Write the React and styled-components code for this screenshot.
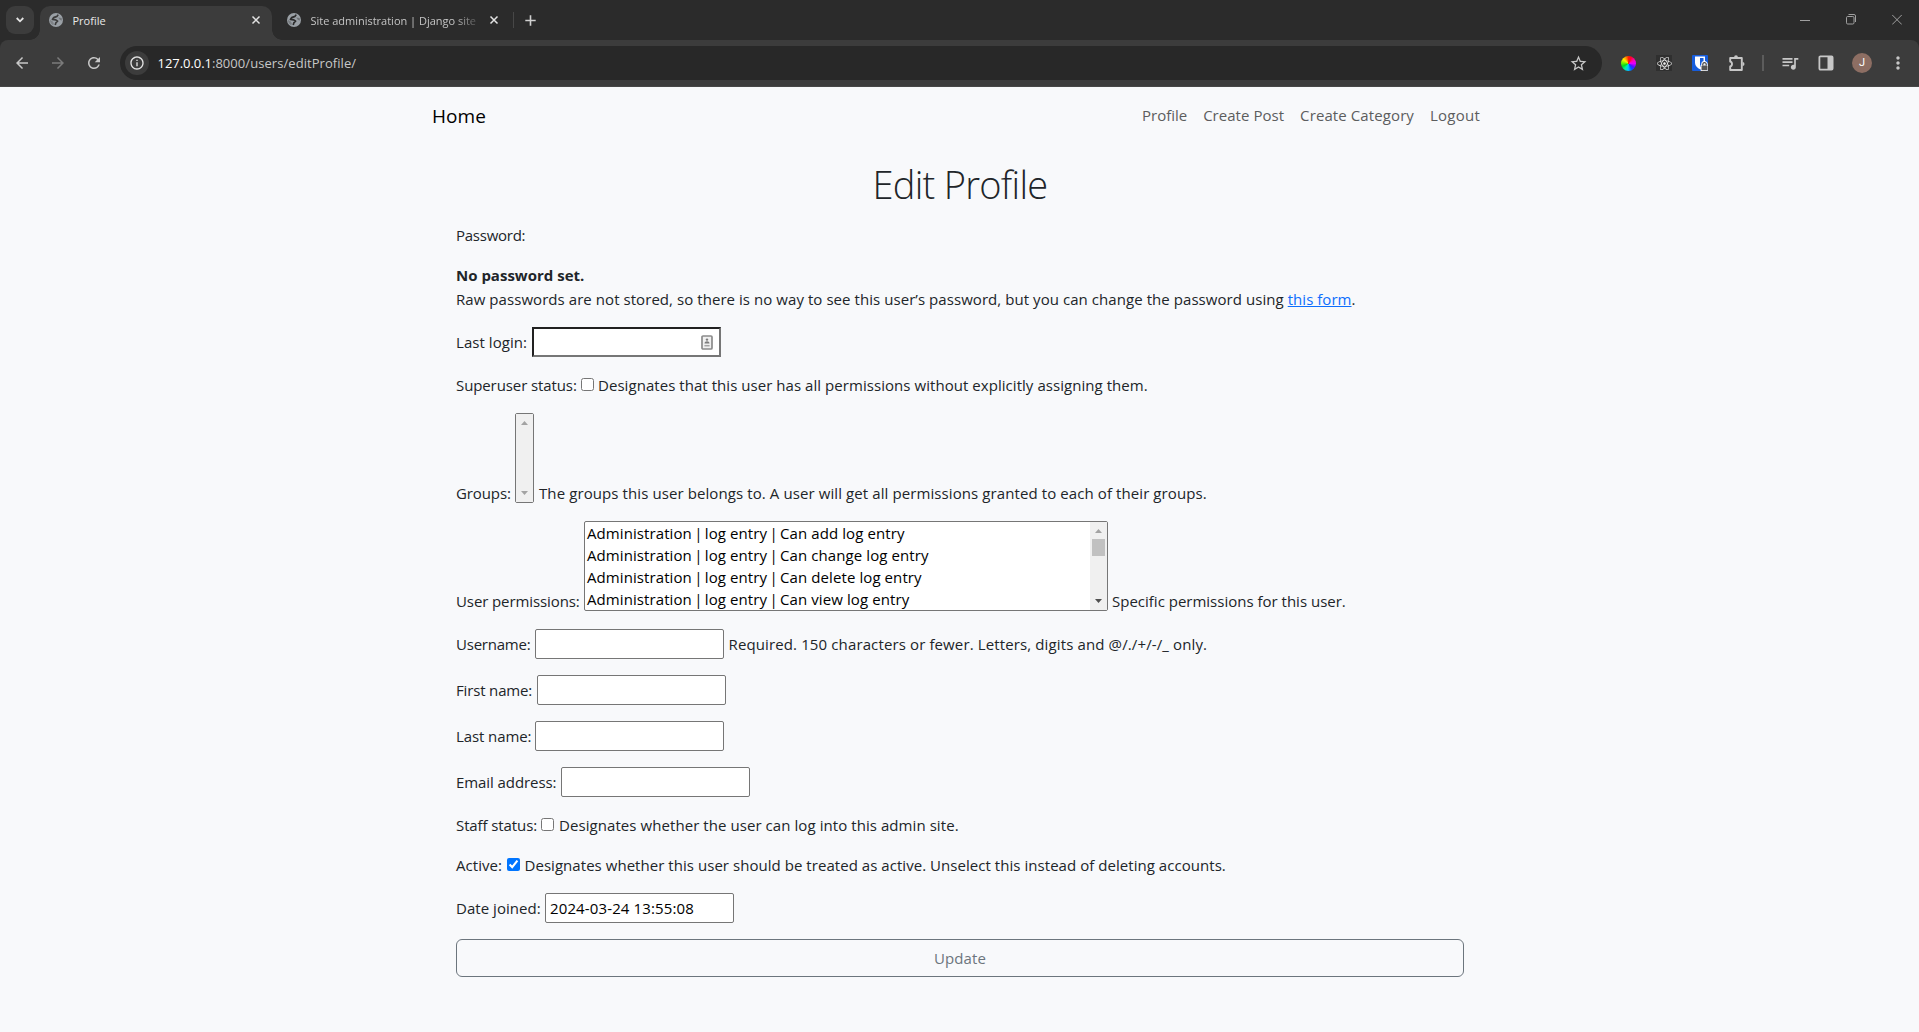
import React from "react";
import styled, { createGlobalStyle, css } from "styled-components";
import {
  MdArrowBack,
  MdArrowForward,
  MdRefresh,
  MdOutlineInfo,
  MdStarBorder,
  MdQueueMusic,
  MdMoreVert,
} from "react-icons/md";
import { FaReact } from "react-icons/fa";

const Global = createGlobalStyle`
  *, *::before, *::after { box-sizing: border-box; }
  body {
    margin: 0;
    background: #f8f9fb;
    color: #212529;
    font: 400 15px/24px "Open Sans", "Noto Sans", sans-serif;
    overflow: hidden;
  }
`;

/* ---------- browser chrome ---------- */

const Browser = styled.header`
  background: #2b2b2b;
  color: #e3e3e3;
`;

const TabStrip = styled.div`
  display: flex;
  align-items: flex-start;
  height: 40px;
  padding: 6px 6px 0;
`;

const TabSearch = styled.div`
  display: grid;
  place-items: center;
  width: 28px;
  height: 28px;
  margin-right: 6px;
  border-radius: 9px;
  background: #3c3c3c;
`;

const Tab = styled.div`
  position: relative;
  display: flex;
  align-items: center;
  width: ${(p) => (p.$active ? 232 : 241)}px;
  height: ${(p) => (p.$active ? 34 : 28)}px;
  padding: ${(p) => (p.$active ? "0 9px 6px" : "0 12px 0 15px")};
  color: ${(p) => (p.$active ? "#e8e8e8" : "#c4c4c4")};
  font-size: 11px;
  line-height: 16px;
  ${(p) =>
    p.$active &&
    css`
      background: #3c3c3c;
      border-radius: 10px 10px 0 0;
      &::before,
      &::after {
        content: "";
        position: absolute;
        bottom: 0;
        width: 10px;
        height: 10px;
      }
      &::before {
        left: -10px;
        background: radial-gradient(circle at 0 0, transparent 9.5px, #3c3c3c 10px);
      }
      &::after {
        right: -10px;
        background: radial-gradient(circle at 100% 0, transparent 9.5px, #3c3c3c 10px);
      }
    `}
`;

const TabTitle = styled.span`
  flex: 1;
  margin: 1px 8px 0 9.5px;
  overflow: hidden;
  white-space: nowrap;
  ${(p) =>
    p.$fade &&
    css`
      letter-spacing: -0.01px;
      mask-image: linear-gradient(to right, #000 calc(100% - 24px), rgba(0, 0, 0, 0.15));
    `}
`;

const TabDivider = styled.div`
  width: 1px;
  height: 16px;
  margin: 6px 9px 0 0;
  background: #474747;
`;

const NewTab = styled.div`
  display: grid;
  place-items: center;
  width: 15px;
  height: 28px;
`;

const WindowButtons = styled.div`
  display: flex;
  gap: 36px;
  margin: 8px 11px 0 auto;
`;

const Toolbar = styled.div`
  display: flex;
  align-items: center;
  height: 47px;
  padding: 0 3px 0 4px;
  background: #3c3c3c;
  border-bottom: 1px solid #474747;
  border-radius: 8px 8px 0 0;
`;

const ToolCell = styled.div`
  display: grid;
  place-items: center;
  flex: none;
  width: 36px;
  height: 34px;
  color: ${(p) => p.$color || "#c7c7c7"};
`;

const ToolDivider = styled.div`
  flex: none;
  width: 2px;
  height: 16px;
  margin: 0 8px;
  background: #5c5c5c;
`;

const Omnibox = styled.div`
  display: flex;
  align-items: center;
  flex: 1;
  height: 34px;
  margin: 0 8px;
  padding: 0 14.5px 0 5px;
  border-radius: 17px;
  background: #282828;
`;

const SiteInfo = styled.div`
  display: grid;
  place-items: center;
  width: 24px;
  height: 24px;
  border-radius: 50%;
  background: #3c3c3c;
  color: #e3e3e3;
`;

const Url = styled.span`
  flex: 1;
  margin-left: 8.5px;
  font-size: 13px;
  letter-spacing: 0.06px;
  color: #c7c7c7;
  b {
    font-weight: 400;
    letter-spacing: -0.05px;
    color: #fff;
  }
`;

const ColorWheel = styled.div`
  width: 15px;
  height: 15px;
  border-radius: 50%;
  background: conic-gradient(
    #ff2000, #ff0030 25deg, #ff00c0 60deg, #e000ff 90deg, #5010ff 125deg,
    #0050ff 150deg, #00c8ff 185deg, #00f0a0 215deg, #00d820 245deg,
    #70f000 275deg, #fff000 310deg, #ff9000 335deg, #ff2000
  );
`;

const ExtensionTile = styled.div`
  display: grid;
  place-items: center;
  width: 16px;
  height: 16px;
  background: #2f2f2f;
  color: #ececec;
`;

const Avatar = styled.div`
  display: grid;
  place-items: center;
  width: 20px;
  height: 20px;
  border-radius: 50%;
  background: #8d6e63;
  color: #fff;
  font: 400 11px/20px Roboto, sans-serif;
`;

/* ---------- page ---------- */

const Navbar = styled.nav`
  display: flex;
  align-items: center;
  justify-content: space-between;
  width: 1055px;
  height: 57px;
  margin: 0 auto;
  padding-right: 7px;
`;

const Brand = styled.a`
  font-size: 19px;
  line-height: 30px;
  letter-spacing: 0.05px;
  color: #000;
`;

const NavLinks = styled.div`
  display: flex;
  gap: 16px;
  padding-bottom: 2px;
  color: #5c5d5e;
`;

const NavItem = styled.a`
  letter-spacing: ${(p) => p.$track}px;
`;

const Main = styled.main`
  display: flex;
  flex-direction: column;
  width: 1009px;
  margin: 0 auto;
  padding-left: 1px;
`;

const Title = styled.h1`
  margin: 16px 0 15px;
  text-align: center;
  font-size: 38px;
  font-weight: 300;
  line-height: 48px;
  letter-spacing: -0.72px;
`;

const Row = styled.div`
  display: flex;
  align-items: ${(p) => (p.$tall ? "flex-end" : "center")};
  height: ${(p) => (p.$tall ? 92 : p.$field ? 30 : 24)}px;
  margin-bottom: ${(p) => (p.$tight ? 0 : 16)}px;
  white-space: pre;
`;

const Label = styled.label`
  flex: none;
  width: ${(p) => p.$width}px;
  letter-spacing: ${(p) => p.$track || 0}px;
`;

const Text = styled.span`
  margin-left: ${(p) => p.$gap || 0}px;
  letter-spacing: ${(p) => p.$track || 0}px;
`;

const Strong = styled.strong`
  font-weight: 700;
`;

const Link = styled.a`
  color: #0d6efd;
  text-decoration: underline;
  letter-spacing: 0.04px;
`;

const Field = styled.div`
  display: flex;
  align-items: center;
  width: 189px;
  height: 30px;
  padding: 0 4px;
  background: #fff;
  color: #000;
  letter-spacing: 0.13px;
  border: 1px solid #767676;
  border-radius: 2px;
  ${(p) =>
    p.$inset &&
    css`
      justify-content: flex-end;
      padding: 0 6px;
      border-width: 2px;
      border-color: #212121 #767676 #767676 #212121;
      border-radius: 0;
    `}
`;

const Checkbox = styled.input.attrs({ type: "checkbox", readOnly: true })`
  align-self: flex-start;
  width: 13px;
  height: 13px;
  margin: 5px 0 0;
`;

const ListBox = styled.div`
  display: flex;
  align-self: flex-start;
  height: 90px;
  width: ${(p) => p.$width}px;
  background: #fff;
  color: #000;
  border: 1px solid #767676;
  border-radius: 2px;
`;

const Options = styled.div`
  flex: 1;
  padding-left: 2px;
  overflow: hidden;
`;

const Option = styled.div`
  height: 22px;
  line-height: 22px;
  letter-spacing: 0.09px;
`;

const Bar = styled.span`
  margin: 0 -1.8px 0 -1.6px;
`;

const ScrollTrack = styled.div`
  display: flex;
  flex-direction: column;
  align-items: center;
  width: 17px;
  background: #f0f0f0;
`;

const Thumb = styled.div`
  width: 13px;
  height: 17px;
  background: #c1c1c1;
`;

const Arrow = styled.svg`
  display: block;
  width: 17px;
  height: 17px;
  fill: ${(p) => (p.$enabled ? "#505050" : "#a3a3a3")};
  margin-top: ${(p) => (p.$end ? "auto" : 0)};
`;

const UpdateButton = styled.button`
  height: 38px;
  padding: 0;
  border: 1px solid #6c757d;
  border-radius: 6px;
  background: transparent;
  color: #6c757d;
  font: inherit;
  letter-spacing: 0.1px;
`;

/* ---------- drawings ---------- */

const Globe = ({ bg }) => (
  <svg width="14" height="14" viewBox="0 0 14 14">
    <circle cx="7" cy="7" r="7" fill="#9aa0a6" />
    <path
      d="M9.2 1.6L8 3.4 4.6 4.6 3.4 6.4 6.8 6.9 8.6 8.2 7 9.6 6.2 12"
      fill="none"
      stroke={bg}
      strokeWidth="1.7"
      strokeLinejoin="round"
    />
    <path d="M.9 6.8l2.6 1.4 1.4 2-.6 2A6 6 0 0 1 .9 6.8z" fill={bg} opacity=".3" />
    <path d="M9.2 4.4l3.4.6.4 2.4-2-.4z" fill={bg} opacity=".4" />
  </svg>
);

const CloseTab = () => (
  <svg width="14" height="14" viewBox="-3 -3 14 14" stroke="#e3e3e3" strokeWidth="1.5">
    <path d="M.5.5l7 7M7.5.5l-7 7" />
  </svg>
);

const Puzzle = () => (
  <svg width="18" height="18" viewBox="-1 0 18 18" fill="none" stroke="#c7c7c7" strokeWidth="1.9">
    <path d="M2.2 4h11.6v12H2.2v-3.6c2.4-.4 2.4-4.4 0-4.8z" strokeLinejoin="round" />
    <path
      d="M6.1 3.2a1.9 1.9 0 0 1 3.8 0zM14.6 8.1a1.9 1.9 0 0 1 0 3.8z"
      fill="#c7c7c7"
      stroke="none"
    />
  </svg>
);

const Vault = () => (
  <svg width="16" height="16" viewBox="0 0 16 16">
    <rect width="16" height="16" rx="1" fill="#175ddc" />
    <path d="M3 1.5h10V8c0 3-2.6 5-5 6.2C5.6 13 3 11 3 8z" fill="#fff" />
    <path d="M8 3h3.5v5c0 1.8-1.7 3.2-3.5 4.2z" fill="#175ddc" />
    <path d="M10.8 10.5V9.3a1.7 1.7 0 0 1 3.4 0v1.2" fill="none" stroke="#fff" strokeWidth="3" />
    <rect x="8.5" y="9.7" width="7.5" height="6.3" rx="1" fill="#fff" />
    <path d="M10.8 10.5V9.3a1.7 1.7 0 0 1 3.4 0v1.2" fill="none" stroke="#444" strokeWidth="1.2" />
    <rect x="9.5" y="10.5" width="6" height="4.8" rx=".6" fill="#555" />
  </svg>
);

const SidePanel = () => (
  <svg width="16" height="16" viewBox="0 0 16 16">
    <rect
      x="1.4"
      y="1.4"
      width="13.2"
      height="13.2"
      rx="1"
      fill="none"
      stroke="#c7c7c7"
      strokeWidth="1.8"
    />
    <path d="M9.5 1.5h5v13h-5z" fill="#c7c7c7" />
  </svg>
);

const ContactCard = () => (
  <svg width="12" height="15" viewBox="0 0 12 15">
    <rect x="1" y="1" width="10" height="13" rx="1" fill="#f0f0f0" stroke="#8b8b8b" strokeWidth="1.7" />
    <circle cx="6" cy="4.6" r="1.2" fill="#7b7b7b" />
    <path d="M3.5 8.6c0-3.2 5-3.2 5 0z" fill="#7b7b7b" />
    <path d="M3.4 10.7h5.2" stroke="#a4a4a4" strokeWidth="1.5" />
  </svg>
);

const Scrollbar = ({ scrollable }) => (
  <ScrollTrack>
    <Arrow viewBox="0 0 17 17">
      <path d="M5 11h7L8.5 7z" />
    </Arrow>
    {scrollable && <Thumb />}
    <Arrow viewBox="0 0 17 17" $end $enabled={scrollable}>
      <path d="M5 6h7l-3.5 4z" />
    </Arrow>
  </ScrollTrack>
);

const permissions = ["add", "change", "delete", "view"];

export default function App() {
  return (
    <>
      <Global />
      <Browser>
        <TabStrip>
          <TabSearch>
            <svg width="8" height="6" viewBox="0 0 8 6" fill="none" stroke="#e3e3e3" strokeWidth="1.8">
              <path d="M.7 1L4 4.3 7.3 1" />
            </svg>
          </TabSearch>
          <Tab $active>
            <Globe bg="#3c3c3c" />
            <TabTitle>Profile</TabTitle>
            <CloseTab />
          </Tab>
          <Tab>
            <Globe bg="#2b2b2b" />
            <TabTitle $fade>Site administration | Django site</TabTitle>
            <CloseTab />
          </Tab>
          <TabDivider />
          <NewTab>
            <svg width="11" height="11" viewBox="0 0 11 11" stroke="#d0d0d0" strokeWidth="1.6">
              <path d="M5.5.3v10.4M.3 5.5h10.4" />
            </svg>
          </NewTab>
          <WindowButtons>
            <svg width="10" height="11" viewBox="0 0 10 11" stroke="#a0a0a0">
              <path d="M0 6.5h10" />
            </svg>
            <svg width="10" height="11" viewBox="0 0 10 11" fill="none" stroke="#a0a0a0">
              <rect x=".5" y="2.5" width="7.5" height="7.5" rx="1.2" />
              <path d="M2.5.5H8A1.5 1.5 0 0 1 9.5 2v6" />
            </svg>
            <svg width="10" height="11" viewBox="0 0 10 11" stroke="#a0a0a0">
              <path d="M.2.9l9.6 9.6M9.8.9L.2 10.5" />
            </svg>
          </WindowButtons>
        </TabStrip>
        <Toolbar>
          <ToolCell>
            <MdArrowBack size={18} />
          </ToolCell>
          <ToolCell $color="#7b7b7b">
            <MdArrowForward size={18} />
          </ToolCell>
          <ToolCell>
            <MdRefresh size={18} />
          </ToolCell>
          <Omnibox>
            <SiteInfo>
              <MdOutlineInfo size={16} />
            </SiteInfo>
            <Url>
              <b>127.0.0.1</b>:8000/users/editProfile/
            </Url>
            <MdStarBorder size={19} color="#c7c7c7" />
          </Omnibox>
          <ToolCell>
            <ColorWheel />
          </ToolCell>
          <ToolCell>
            <ExtensionTile>
              <FaReact size={15} />
            </ExtensionTile>
          </ToolCell>
          <ToolCell>
            <Vault />
          </ToolCell>
          <ToolCell>
            <Puzzle />
          </ToolCell>
          <ToolDivider />
          <ToolCell>
            <MdQueueMusic size={20} />
          </ToolCell>
          <ToolCell>
            <SidePanel />
          </ToolCell>
          <ToolCell>
            <Avatar>J</Avatar>
          </ToolCell>
          <ToolCell>
            <MdMoreVert size={20} />
          </ToolCell>
        </Toolbar>
      </Browser>

      <Navbar>
        <Brand>Home</Brand>
        <NavLinks>
          <NavItem $track={-0.03}>Profile</NavItem>
          <NavItem $track={0.04}>Create Post</NavItem>
          <NavItem $track={0.1}>Create Category</NavItem>
          <NavItem $track={0.24}>Logout</NavItem>
        </NavLinks>
      </Navbar>

      <Main>
        <Title>Edit Profile</Title>
        <Row>
          <Label $track={-0.25}>Password:</Label>
        </Row>
        <Row $tight>
          <Strong>No password set.</Strong>
        </Row>
        <Row>
          <Text $track={0.06}>
            Raw passwords are not stored, so there is no way to see this user’s password, but you can
            change the password using{" "}
          </Text>
          <Link>this form</Link>.
        </Row>
        <Row $field>
          <Label $width={76} $track={0.05}>Last login:</Label>
          <Field $inset>
            <ContactCard />
          </Field>
        </Row>
        <Row>
          <Label $width={125} $track={-0.1}>Superuser status:</Label>
          <Checkbox />
          <Text $gap={4} $track={0.05}>
            Designates that this user has all permissions without explicitly assigning them.
          </Text>
        </Row>
        <Row $tall>
          <Label $width={59} $track={-0.1}>Groups:</Label>
          <ListBox $width={19}>
            <Scrollbar />
          </ListBox>
          <Text $gap={5} $track={0.095}>
            The groups this user belongs to. A user will get all permissions granted to each of their groups.
          </Text>
        </Row>
        <Row $tall>
          <Label $width={128} $track={-0.1}>User permissions:</Label>
          <ListBox $width={524}>
            <Options>
              {permissions.map((action) => (
                <Option key={action}>
                  Administration <Bar>|</Bar> log entry <Bar>|</Bar> Can {action} log entry
                </Option>
              ))}
            </Options>
            <Scrollbar scrollable />
          </ListBox>
          <Text $gap={4}>Specific permissions for this user.</Text>
        </Row>
        <Row $field>
          <Label $width={79} $track={-0.22}>Username:</Label>
          <Field />
          <Text $gap={4.5} $track={0.125}>
            Required. 150 characters or fewer. Letters, digits and @/./+/-/_ only.
          </Text>
        </Row>
        <Row $field>
          <Label $width={81} $track={-0.16}>First name:</Label>
          <Field />
        </Row>
        <Row $field>
          <Label $width={79} $track={-0.1}>Last name:</Label>
          <Field />
        </Row>
        <Row $field>
          <Label $width={105} $track={-0.08}>Email address:</Label>
          <Field />
        </Row>
        <Row>
          <Label $width={85} $track={-0.1}>Staff status:</Label>
          <Checkbox />
          <Text $gap={5} $track={0.07}>
            Designates whether the user can log into this admin site.
          </Text>
        </Row>
        <Row>
          <Label $width={51} $track={0.05}>Active:</Label>
          <Checkbox checked />
          <Text $gap={4.5} $track={0.046}>
            Designates whether this user should be treated as active. Unselect this instead of deleting accounts.
          </Text>
        </Row>
        <Row $field>
          <Label $width={89} $track={0.04}>Date joined:</Label>
          <Field>2024-03-24 13:55:08</Field>
        </Row>
        <UpdateButton>Update</UpdateButton>
      </Main>
    </>
  );
}
